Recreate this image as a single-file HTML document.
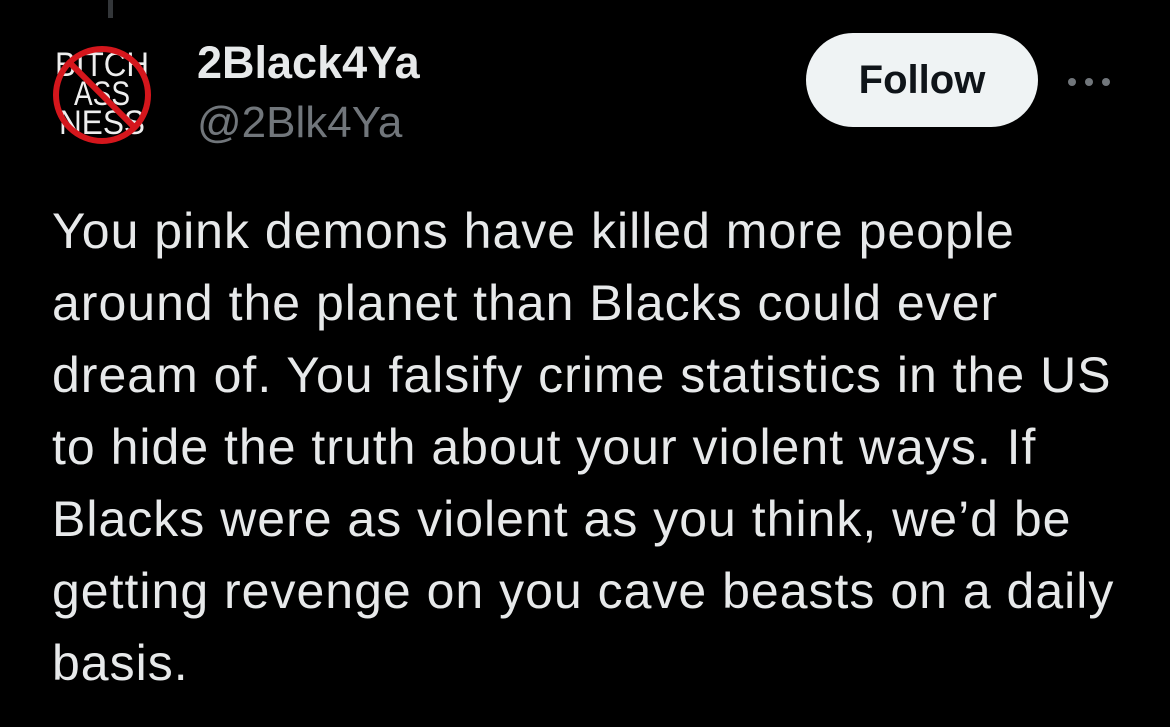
<!DOCTYPE html>
<html><head><style>
body{margin:0;width:1170px;height:727px;background:#000;overflow:hidden;font-family:"Liberation Sans",sans-serif;position:relative}
.line{position:absolute;left:108px;top:0;width:5px;height:18px;background:#333639}
.av{position:absolute;left:52px;top:45px;width:100px;height:100px}
.name{position:absolute;left:197px;top:37px;color:#e7e9ea;font-weight:bold;font-size:45px}
.handle{position:absolute;left:197px;top:98px;color:#71767b;font-size:44px}
.btn{position:absolute;left:806px;top:33px;width:232px;height:94px;border-radius:47px;background:#eff3f4;color:#0f1419;font-weight:bold;font-size:40px;display:flex;align-items:center;justify-content:center}
.dots{position:absolute;left:1066px;top:74px}
.text{position:absolute;left:52px;top:195px;width:1110px;color:#e7e9ea;font-size:50px;letter-spacing:1px;line-height:72px;white-space:nowrap}
</style></head><body>
<div class="line"></div>
<svg class="av" viewBox="0 0 100 100">
<circle cx="50" cy="50" r="50" fill="#000"/>
<g fill="#eee" font-family="Liberation Sans,sans-serif" font-size="34" text-anchor="middle">
<text x="50" y="31" textLength="94" lengthAdjust="spacingAndGlyphs">BITCH</text>
<text x="50" y="60" textLength="56" lengthAdjust="spacingAndGlyphs">ASS</text>
<text x="50" y="89" textLength="86" lengthAdjust="spacingAndGlyphs">NESS</text>
</g>
<circle cx="50" cy="50" r="46" fill="none" stroke="#d4161c" stroke-width="6"/>
<line x1="18" y1="18" x2="82" y2="82" stroke="#d4161c" stroke-width="6"/>
</svg>
<div class="name">2Black4Ya</div>
<div class="handle">@2Blk4Ya</div>
<div class="btn">Follow</div>
<svg class="dots" width="46" height="16"><circle cx="6" cy="8" r="4" fill="#71767b"/><circle cx="23" cy="8" r="4" fill="#71767b"/><circle cx="40" cy="8" r="4" fill="#71767b"/></svg>
<div class="text">You pink demons have killed more people<br>around the planet than Blacks could ever<br>dream of. You falsify crime statistics in the US<br>to hide the truth about your violent ways. If<br>Blacks were as violent as you think, we’d be<br>getting revenge on you cave beasts on a daily<br>basis.</div>
</body></html>
